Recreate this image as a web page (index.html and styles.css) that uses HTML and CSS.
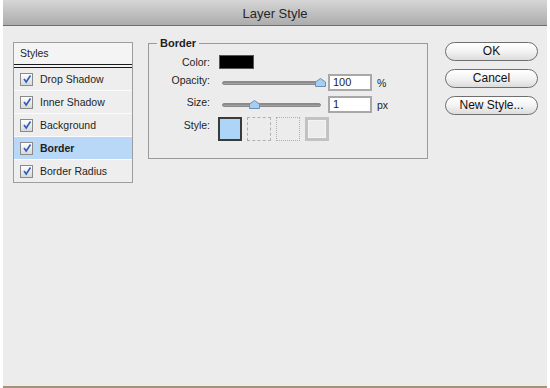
FILE: index.html
```html
<!DOCTYPE html>
<html>
<head>
<meta charset="utf-8">
<link rel="stylesheet" href="styles.css">
</head>
<body>
<div class="window">
  <div class="titlebar">Layer Style</div>
  <div class="content">
    <div class="styles-panel">
      <div class="styles-head">Styles</div>
      <div class="style-row"><span class="cb"><svg width="10" height="10" viewBox="0 0 10 10"><path d="M2 5 L4.2 8 L8.5 1.5" fill="none" stroke="#2f5fb8" stroke-width="1.6"/></svg></span>Drop Shadow</div>
      <div class="style-row"><span class="cb"><svg width="10" height="10" viewBox="0 0 10 10"><path d="M2 5 L4.2 8 L8.5 1.5" fill="none" stroke="#2f5fb8" stroke-width="1.6"/></svg></span>Inner Shadow</div>
      <div class="style-row"><span class="cb"><svg width="10" height="10" viewBox="0 0 10 10"><path d="M2 5 L4.2 8 L8.5 1.5" fill="none" stroke="#2f5fb8" stroke-width="1.6"/></svg></span>Background</div>
      <div class="style-row selected"><span class="cb"><svg width="10" height="10" viewBox="0 0 10 10"><path d="M2 5 L4.2 8 L8.5 1.5" fill="none" stroke="#2f5fb8" stroke-width="1.6"/></svg></span>Border</div>
      <div class="style-row last"><span class="cb"><svg width="10" height="10" viewBox="0 0 10 10"><path d="M2 5 L4.2 8 L8.5 1.5" fill="none" stroke="#2f5fb8" stroke-width="1.6"/></svg></span>Border Radius</div>
    </div>
    <fieldset class="border-group">
      <legend>Border</legend>
      <div class="frow color-row">
        <span class="lbl">Color:</span>
        <span class="swatch"></span>
      </div>
      <div class="frow input-row">
        <span class="lbl">Opacity:</span>
        <span class="slider"><span class="track"></span><svg class="thumb thumb-full" width="11" height="9" viewBox="0 0 11 9"><path d="M0.5 8.5 L0.5 4 L5.5 0.5 L10.5 4 L10.5 8.5 Z" fill="#a9cdef" stroke="#6a8fb8"/></svg></span>
        <span class="num">100</span>
        <span class="unit">%</span>
      </div>
      <div class="frow input-row">
        <span class="lbl">Size:</span>
        <span class="slider"><span class="track"></span><svg class="thumb thumb-size" width="11" height="9" viewBox="0 0 11 9"><path d="M0.5 8.5 L0.5 4 L5.5 0.5 L10.5 4 L10.5 8.5 Z" fill="#a9cdef" stroke="#6a8fb8"/></svg></span>
        <span class="num">1</span>
        <span class="unit">px</span>
      </div>
      <div class="frow style-pick">
        <span class="lbl">Style:</span>
        <span class="boxes">
          <span class="box solid"></span>
          <span class="box dashed"></span>
          <span class="box dotted"></span>
          <span class="box double"></span>
        </span>
      </div>
    </fieldset>
    <div class="buttons">
      <div class="btn">OK</div>
      <div class="btn">Cancel</div>
      <div class="btn">New Style...</div>
    </div>
  </div>
</div>
</body>
</html>
```
FILE: styles.css
```css
html, body {
  margin: 0;
  padding: 0;
  background: #ffffff;
}
body {
  width: 550px;
  height: 388px;
  font-family: "Liberation Sans", Arial, sans-serif;
  color: #1e1e1e;
  font-size: 11px;
}
.window {
  margin-left: 3px;
  width: 544px;
  height: 386px;
  background: #ececec;
  border-bottom: 2px solid #a39479;
  display: flex;
  flex-direction: column;
  box-sizing: content-box;
}
.titlebar {
  height: 25px;
  border-bottom: 1px solid #6e6e6e;
  background: linear-gradient(#d6d6d6, #acacac);
  text-align: center;
  line-height: 27px;
  font-size: 13px;
  color: #262626;
  flex: none;
}
.content {
  display: flex;
  align-items: flex-start;
  padding: 16px 0 0 10px;
}
.styles-panel {
  width: 118px;
  border: 1px solid #9d9d9d;
  background: #f2f2f2;
  flex: none;
}
.styles-head {
  height: 21px;
  line-height: 21px;
  padding-left: 6px;
  font-size: 10.5px;
  border-bottom: 4px double #1a1a1a;
  background: #f4f4f4;
}
.style-row {
  height: 22px;
  border-bottom: 1px solid #fbfbfb;
  display: flex;
  align-items: center;
  padding-left: 6px;
  gap: 7px;
  font-size: 10.5px;
  background: #eeeeee;
}
.style-row.last {
  border-bottom: none;
}
.style-row.selected {
  background: #b9d7f7;
  font-weight: bold;
}
.cb {
  width: 11px;
  height: 11px;
  border: 1px solid #8a8a8a;
  background: linear-gradient(#ffffff, #d8d8d8);
  display: flex;
  align-items: center;
  justify-content: center;
  flex: none;
}
.border-group {
  margin: -5px 0 0 15px;
  width: 280px;
  height: 122px;
  box-sizing: border-box;
  border: 1px solid #9a9a9a;
  padding: 5px 0 0 0;
  flex: none;
  display: flex;
  flex-direction: column;
  gap: 4px;
}
.border-group legend {
  font-weight: bold;
  font-size: 11px;
  padding: 0 3px;
  margin-left: 8px;
}
.frow {
  display: flex;
  align-items: center;
}
.lbl {
  width: 61px;
  text-align: right;
  flex: none;
  font-size: 10.5px;
}
.color-row {
  height: 15px;
}
.swatch {
  margin-left: 9px;
  width: 33px;
  height: 12px;
  border: 1px solid #555;
  background: #000;
}
.input-row {
  height: 17px;
  margin-top: 1px;
}
.input-row .lbl {
  align-self: flex-start;
}
.slider {
  margin-left: 12px;
  width: 103px;
  height: 10px;
  position: relative;
  display: flex;
  align-items: center;
  flex: none;
}
.track {
  width: 99px;
  height: 4px;
  border-radius: 2px;
  background: linear-gradient(#9a9a9a, #7d7d7d 50%, #c8c8c8);
  border: 1px solid #8a8a8a;
  box-sizing: border-box;
}
.thumb {
  position: absolute;
  top: 0;
}
.thumb-full {
  left: 93px;
}
.thumb-size {
  left: 27px;
}
.num {
  margin-left: 3px;
  width: 44px;
  height: 17px;
  box-sizing: border-box;
  border: 2px solid #a8a8a8;
  background: #fff;
  padding-left: 3px;
  line-height: 13px;
  font-size: 11px;
  flex: none;
}
.unit {
  margin-left: 5px;
  font-size: 10.5px;
}
.style-pick {
  align-items: flex-start;
  height: 25px;
}
.style-pick .lbl {
  padding-top: 2px;
}
.boxes {
  margin-left: 8px;
  display: flex;
  gap: 5px;
}
.box {
  width: 24px;
  height: 24px;
  box-sizing: border-box;
}
.box.solid {
  background: #acd5f8;
  border: 2px solid #3a3a3a;
}
.box.dashed {
  border: 1px dashed #b0b0b0;
}
.box.dotted {
  border: 1px dotted #b0b0b0;
}
.box.double {
  border: 3px solid #c2c2c2;
  box-shadow: inset 0 0 0 1px #f4f4f4;
}
.buttons {
  margin-left: 17px;
  display: flex;
  flex-direction: column;
  gap: 8px;
}
.btn {
  width: 93px;
  height: 19px;
  box-sizing: border-box;
  border: 1px solid #6f6f6f;
  border-radius: 10px;
  background: linear-gradient(#ffffff, #f3f3f3 50%, #dcdcdc);
  text-align: center;
  line-height: 17px;
  font-size: 12px;
  color: #111;
}
```
